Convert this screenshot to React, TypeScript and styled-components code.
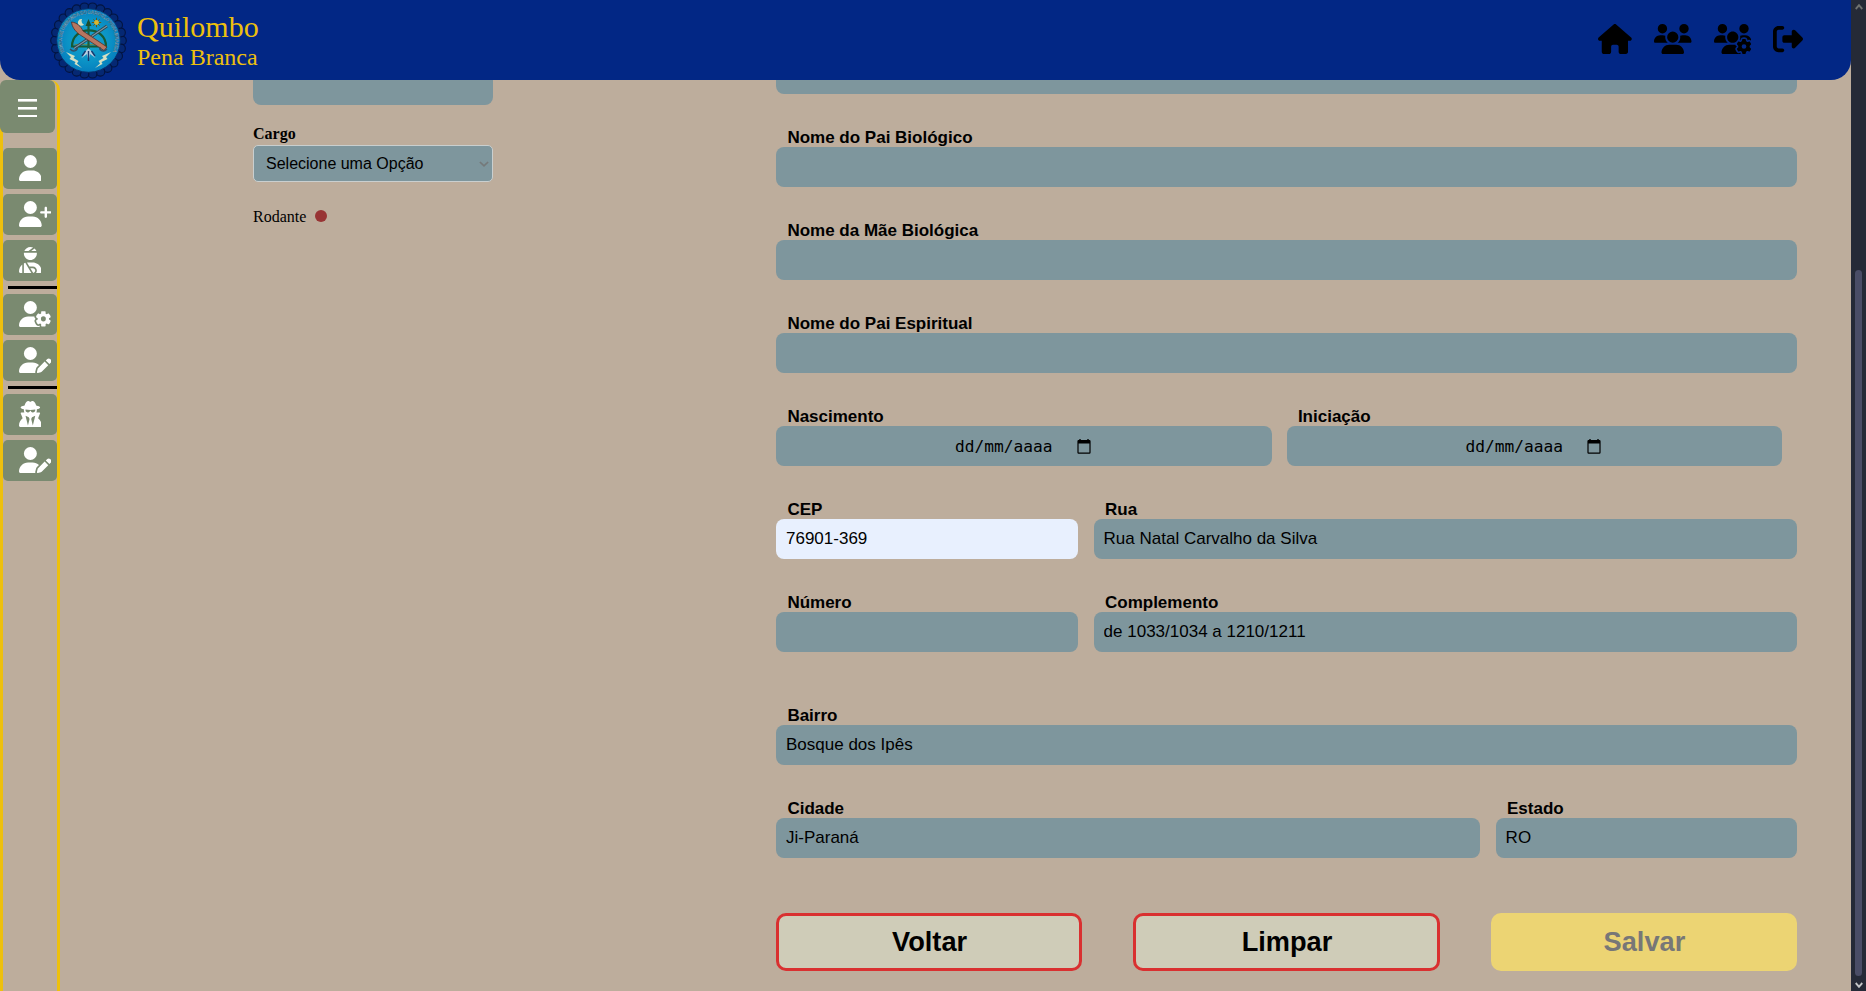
import React from "react";
import styled, { createGlobalStyle } from "styled-components";
import {
  FaHouse,
  FaUsers,
  FaUsersGear,
  FaRightFromBracket,
  FaUser,
  FaUserPlus,
  FaUserInjured,
  FaUserGear,
  FaUserPen,
  FaUserSecret,
} from "react-icons/fa6";

const sans = `"Liberation Sans", Arial, sans-serif`;
const serif = `"Liberation Serif", "Times New Roman", serif`;

const colors = {
  page: "#bdad9c",
  header: "#022785",
  gold: "#edc00e",
  field: "#7e969d",
  autofill: "#e8f0fe",
  menu: "#7a8a70",
  danger: "#d93030",
};

const GlobalStyle = createGlobalStyle`
  * { box-sizing: border-box; }
  body { margin: 0; background: ${colors.page}; font-family: ${serif}; color: #000; }
`;

const Page = styled.div`
  display: flex;
  height: 991px;
  overflow: hidden;
`;

const Screen = styled.div`
  flex: 1;
  display: flex;
  flex-direction: column;
  min-width: 0;
`;

const Header = styled.header`
  display: flex;
  align-items: center;
  height: 80px;
  flex: none;
  padding: 0 48px 0 50px;
  background: ${colors.header};
  border-radius: 0 0 20px 20px;
`;

const Brand = styled.div`
  display: flex;
  flex-direction: column;
  margin-left: 10px;
  padding-top: 2px;
  color: ${colors.gold};
`;

const BrandName = styled.span`
  font-size: 30px;
  line-height: 32px;
`;

const BrandSub = styled.span`
  font-size: 24px;
  line-height: 28px;
`;

const HeaderNav = styled.nav`
  display: flex;
  gap: 22px;
  margin-left: auto;
  padding-bottom: 2px;
  font-size: 30px;
  color: #000;
`;

/* Font Awesome glyphs share one height but differ in width. */
const Icon = styled.span<{ $width: number }>`
  display: flex;
  flex: none;

  svg {
    width: ${(p) => p.$width / 512}em;
    height: 1em;
  }
`;

const Body = styled.div`
  flex: 1;
  display: flex;
  min-height: 0;
  overflow: hidden;
`;

const Sidebar = styled.aside`
  display: flex;
  flex-direction: column;
  gap: 5px;
  width: 60px;
  border: solid ${colors.gold};
  border-width: 0 3px;
  border-radius: 10px 10px 0 0;
`;

const MenuToggle = styled.button`
  display: flex;
  align-items: center;
  justify-content: center;
  width: 55px;
  height: 53px;
  flex: none;
  margin: 0 0 10px -3px;
  padding: 2px 0 0;
  border: 0;
  border-radius: 6px;
  background: ${colors.menu};
`;

const MenuItem = styled.button`
  display: flex;
  align-items: center;
  height: 41px;
  flex: none;
  padding: 0 0 1px 15.7px;
  border: 0;
  border-radius: 5px;
  background: ${colors.menu};
  color: #fff;
  font-size: 26px;
`;

const Divider = styled.div`
  height: 3px;
  flex: none;
  margin-left: 5px;
  background: #000;
`;

const Content = styled.main`
  flex: 1;
  display: flex;
  align-items: flex-start;
  padding-left: 193px;
`;

const ProfileColumn = styled.section`
  display: flex;
  flex-direction: column;
  width: 240px;
  margin-top: -15px;
`;

const ProfileBox = styled.div`
  height: 40px;
  border-radius: 8px;
  background: ${colors.field};
`;

const ProfileLabel = styled.label`
  margin-top: 20px;
  height: 20px;
  font-size: 16px;
  line-height: 18px;
  font-weight: bold;
`;

const Select = styled.div`
  display: flex;
  align-items: center;
  justify-content: space-between;
  height: 37px;
  padding: 0 3px 0 12px;
  border: 1px solid #c9cfcf;
  border-radius: 5px;
  background: ${colors.field};
  font: 16px ${sans};
`;

const Toggle = styled.div`
  display: flex;
  align-items: center;
  gap: 9px;
  margin-top: 25px;
  font-size: 16px;
  line-height: 20px;
`;

const Dot = styled.span`
  width: 12px;
  height: 12px;
  margin-bottom: 2px;
  border-radius: 50%;
  background: #983434;
`;

const Form = styled.form`
  display: flex;
  flex-direction: column;
  gap: 33px;
  width: 1021px;
  margin: -46px 0 0 283px;
  font-family: ${sans};
`;

const Row = styled.div<{ $columns?: string; $gap?: number; $inset?: number; $space?: number }>`
  display: grid;
  grid-template-columns: ${(p) => p.$columns ?? "1fr"};
  column-gap: ${(p) => p.$gap ?? 16}px;
  padding-right: ${(p) => p.$inset ?? 0}px;
  margin-top: ${(p) => p.$space ?? 0}px;
`;

const FieldGroup = styled.div`
  display: flex;
  flex-direction: column;
  min-width: 0;
`;

const Label = styled.label`
  height: 20px;
  padding-left: 11.4px;
  font-size: 17px;
  line-height: 22px;
  font-weight: bold;
`;

const Input = styled.input<{ $filled?: boolean }>`
  width: 100%;
  height: 40px;
  padding: 0 10px;
  border: 0;
  border-radius: 8px;
  outline: none;
  background: ${(p) => (p.$filled ? colors.autofill : colors.field)};
  color: #000;
  font: 17px ${sans};
`;

const DateBox = styled.div`
  display: flex;
  align-items: center;
  height: 40px;
  padding-left: 179px;
  gap: 24.4px;
  border-radius: 8px;
  background: ${colors.field};
  font: 16.2px "DejaVu Sans Mono", monospace;
`;

const Actions = styled.div`
  display: flex;
  justify-content: space-between;
  margin-top: 22px;
`;

const ActionButton = styled.button<{ $primary?: boolean }>`
  width: 306.2px;
  height: 58px;
  padding: 0 0 0 1px;
  border: 3px solid ${(p) => (p.$primary ? "#ecd473" : colors.danger)};
  border-radius: 10px;
  background: ${(p) => (p.$primary ? "#ecd473" : "#cfccb8")};
  color: ${(p) => (p.$primary ? "#777" : "#000")};
  font: bold 27.2px ${sans};
`;

const Scrollbar = styled.div`
  display: flex;
  flex-direction: column;
  align-items: center;
  justify-content: space-between;
  width: 15px;
  flex: none;
  padding: 4px 0 3px;
  background: #252a37;
`;

const Thumb = styled.div`
  width: 7px;
  height: 706px;
  margin: auto 0 6px;
  border-radius: 4px;
  background: #4a4d66;
`;

const scallops = Array.from({ length: 26 }, (_, i) => {
  const a = (i * Math.PI * 2) / 26;
  return { x: 38.5 + 33.4 * Math.cos(a), y: 38.5 + 33.4 * Math.sin(a) };
});

function Logo() {
  return (
    <svg width="77" height="77" viewBox="0 0 77 77">
      <defs>
        <radialGradient id="sea">
          <stop offset="0" stopColor="#18a5cc" />
          <stop offset="0.65" stopColor="#0b93c6" />
          <stop offset="1" stopColor="#067fbe" />
        </radialGradient>
        <path id="ring" d="M14.5 50.5A26.8 26.8 0 1 1 62.5 50.5" />
      </defs>
      <circle cx="38.5" cy="38.5" r="34.5" fill="#06225f" />
      {scallops.map((s, i) => (
        <circle key={i} cx={s.x} cy={s.y} r="4.4" fill="#052873" stroke="#031440" strokeWidth="1.1" />
      ))}
      <circle cx="38.5" cy="38.5" r="31.8" fill="url(#sea)" stroke="#06306e" strokeWidth="1" />
      <text fontFamily="Liberation Sans" fontSize="4.8" fontWeight="bold" fill="#174066" stroke="#a9c6cf" strokeWidth="0.2">
        <textPath href="#ring" textLength="108">TENDA DE UMBANDA DO CABOCLO PENA BRANCA</textPath>
      </text>
      <path d="M22 44.5C22 23 56 23 56 44.5Z" fill="none" stroke="#155a35" strokeWidth="2.2" />
      <path d="M24.5 42.5H53.5" stroke="#6e8b45" strokeWidth="0.8" />
      <path d="M38.5 49V20" stroke="#1c5b3b" strokeWidth="2.2" />
      <path d="M38.5 17L35.5 24H41.5Z" fill="#1d4d2c" />
      <path d="M57 24L24 46.5" stroke="#33424e" strokeWidth="2.8" />
      <path d="M57 24L24 46.5" stroke="#7d99a1" strokeWidth="1.1" />
      <path d="M21.5 20C27 20.5 31 24.5 33 29L57 45L54 48.5L29.5 32.5C25 29 22 25 21.5 20Z" fill="#b87660" stroke="#532d2a" strokeWidth="0.8" />
      <path d="M20 47C24 51 28 48 27 45M57 47C53 51 49 48 50 45" fill="none" stroke="#344e63" strokeWidth="1.5" />
      <path d="M32 17A3.4 3.4 0 1 0 34 22.5A4 4 0 0 1 32 17Z" fill="#d4e0c3" />
      <path d="M46.5 15.8V25.2M41.8 20.5H51.2M43.4 17.4L49.6 23.6M49.6 17.4L43.4 23.6" stroke="#5c561f" strokeWidth="1" />
      <circle cx="46.5" cy="20.5" r="2.4" fill="#dfb62b" />
      <path d="M38.5 46L35 50L31.5 56L37 52L38.5 59L40 52L45.5 56L42 50Z" fill="#b7cfe0" />
      <path d="M38.5 49V59M35.5 49L32 54M41.5 49L45 54" stroke="#173a70" strokeWidth="1.4" />
      <path d="M16 50L25 54L23.5 56L28.5 59L27 61.5L32 66L24.5 62L25.5 60L19.5 57L21 55ZM61 50L52 54L53.5 56L48.5 59L50 61.5L45 66L52.5 62L51.5 60L57.5 57L56 55Z" fill="#d5dfc2" />
    </svg>
  );
}

function HamburgerIcon() {
  return (
    <svg width="19" height="18" viewBox="0 0 19 18" fill="#fff">
      <rect y="0" width="19" height="2.6" />
      <rect y="8" width="19" height="2.6" />
      <rect y="16" width="19" height="2" />
    </svg>
  );
}

function CalendarIcon() {
  return (
    <svg width="14" height="15" viewBox="0 0 14 15">
      <path d="M3 0V2M11 0V2" stroke="#000" strokeWidth="1.4" />
      <rect x="1" y="1.7" width="12" height="12.4" rx="0.6" fill="none" stroke="#000" strokeWidth="1.2" />
      <rect x="1" y="1.5" width="12" height="3" fill="#000" />
    </svg>
  );
}

function Chevron({ size, color, up, width = 1.5 }: { size: number; color: string; up?: boolean; width?: number }) {
  return (
    <svg width={size} height={6} viewBox="0 0 9 6" preserveAspectRatio="none">
      <path d={up ? "M0.8 5L4.5 1.2L8.2 5" : "M0.8 1L4.5 4.8L8.2 1"} fill="none" stroke={color} strokeWidth={width} />
    </svg>
  );
}

function Field({ label, value, filled }: { label: string; value?: string; filled?: boolean }) {
  return (
    <FieldGroup>
      <Label>{label}</Label>
      <Input $filled={filled} defaultValue={value} />
    </FieldGroup>
  );
}

function DateField({ label }: { label: string }) {
  return (
    <FieldGroup>
      <Label>{label}</Label>
      <DateBox>
        <span>dd/mm/aaaa</span>
        <CalendarIcon />
      </DateBox>
    </FieldGroup>
  );
}

export default function App() {
  return (
    <Page>
      <GlobalStyle />
      <Screen>
        <Header>
          <Logo />
          <Brand>
            <BrandName>Quilombo</BrandName>
            <BrandSub>Pena Branca</BrandSub>
          </Brand>
          <HeaderNav>
            <Icon $width={576}><FaHouse /></Icon>
            <Icon $width={640}><FaUsers /></Icon>
            <Icon $width={640}><FaUsersGear /></Icon>
            <Icon $width={512}><FaRightFromBracket /></Icon>
          </HeaderNav>
        </Header>
        <Body>
          <Sidebar>
            <MenuToggle><HamburgerIcon /></MenuToggle>
            <MenuItem><Icon $width={448}><FaUser /></Icon></MenuItem>
            <MenuItem><Icon $width={640}><FaUserPlus /></Icon></MenuItem>
            <MenuItem><Icon $width={448}><FaUserInjured /></Icon></MenuItem>
            <Divider />
            <MenuItem><Icon $width={640}><FaUserGear /></Icon></MenuItem>
            <MenuItem><Icon $width={640}><FaUserPen /></Icon></MenuItem>
            <Divider />
            <MenuItem><Icon $width={448}><FaUserSecret /></Icon></MenuItem>
            <MenuItem><Icon $width={640}><FaUserPen /></Icon></MenuItem>
          </Sidebar>
          <Content>
            <ProfileColumn>
              <ProfileBox />
              <ProfileLabel>Cargo</ProfileLabel>
              <Select>
                Selecione uma Opção
                <Chevron size={10} color="#75797a" />
              </Select>
              <Toggle>
                Rodante
                <Dot />
              </Toggle>
            </ProfileColumn>
            <Form>
              <Row><Field label="" /></Row>
              <Row><Field label="Nome do Pai Biológico" /></Row>
              <Row><Field label="Nome da Mãe Biológica" /></Row>
              <Row><Field label="Nome do Pai Espiritual" /></Row>
              <Row $columns="1fr 1fr" $gap={15} $inset={15}>
                <DateField label="Nascimento" />
                <DateField label="Iniciação" />
              </Row>
              <Row $columns="301.6px 1fr">
                <Field label="CEP" value="76901-369" filled />
                <Field label="Rua" value="Rua Natal Carvalho da Silva" />
              </Row>
              <Row $columns="301.6px 1fr">
                <Field label="Número" />
                <Field label="Complemento" value="de 1033/1034 a 1210/1211" />
              </Row>
              <Row $space={20}><Field label="Bairro" value="Bosque dos Ipês" /></Row>
              <Row $columns="1fr 301.4px">
                <Field label="Cidade" value="Ji-Paraná" />
                <Field label="Estado" value="RO" />
              </Row>
              <Actions>
                <ActionButton type="button">Voltar</ActionButton>
                <ActionButton type="button">Limpar</ActionButton>
                <ActionButton type="button" $primary disabled>Salvar</ActionButton>
              </Actions>
            </Form>
          </Content>
        </Body>
      </Screen>
      <Scrollbar>
        <Chevron size={8} color="#6f7270" up width={2} />
        <Thumb />
        <Chevron size={8} color="#c4c6c8" width={2} />
      </Scrollbar>
    </Page>
  );
}
